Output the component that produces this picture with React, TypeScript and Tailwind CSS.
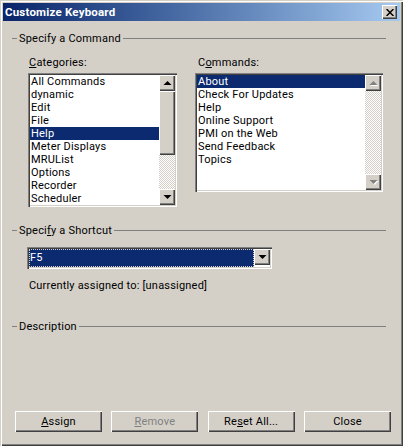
import React from "react";

const categories = ["All Commands", "dynamic", "Edit", "File", "Help", "Meter Displays", "MRUList", "Options", "Recorder", "Scheduler"];
const commands = ["About", "Check For Updates", "Help", "Online Support", "PMI on the Web", "Send Feedback", "Topics"];

const raised = "shadow-[inset_1px_1px_0_#ffffff,inset_-1px_-1px_0_#404040,inset_-2px_-2px_0_#808080]";
const sunken = "shadow-[inset_1px_1px_0_#808080,inset_2px_2px_0_#404040,inset_-1px_-1px_0_#ffffff,inset_-2px_-2px_0_#d4d0c8]";

const Arrow = ({ up, disabled }: { up?: boolean; disabled?: boolean }) => (
  <svg width="9" height="6" viewBox="0 0 9 6" className={disabled ? "drop-shadow-[1px_1px_0_#ffffff]" : ""}>
    <path d={up ? "M4.5 1 L8.5 5 L0.5 5 Z" : "M0.5 1 L8.5 1 L4.5 5 Z"} fill={disabled ? "#808080" : "#000000"} />
  </svg>
);

const ScrollButton = ({ up, disabled }: { up?: boolean; disabled?: boolean }) => (
  <div className={`h-4 w-4 shrink-0 flex items-center justify-center bg-[#d4d0c8] ${raised}`}>
    <Arrow up={up} disabled={disabled} />
  </div>
);

const Track = ({ grow }: { grow?: boolean }) => (
  <div className={`${grow ? "flex-1" : "h-[34px]"} bg-[repeating-conic-gradient(#ffffff_0_25%,#d4d0c8_0_50%)] bg-[length:2px_2px]`} />
);

const GroupHeader = ({ children }: { children: React.ReactNode }) => (
  <div className="flex items-center h-[13px] pr-[14px]">
    <div className="w-[5px] h-px bg-[#808080] mr-[2px]" />
    <span>{children}</span>
    <div className="flex-1 h-px bg-[#808080] ml-[2px]" />
  </div>
);

const ListBox = ({ items, selected, width, height, children }: { items: string[]; selected: string; width: string; height: string; children: React.ReactNode }) => (
  <div className={`${width} ${height} ${sunken} p-[2px] bg-white flex`}>
    <div className="flex-1 flex flex-col text-black">
      {items.map((it) => (
        <div key={it} className={`h-[13px] leading-[13px] pl-[1px] whitespace-nowrap ${it === selected ? "bg-[#0c2a70] text-white" : ""}`}>
          {it}
        </div>
      ))}
    </div>
    <div className="w-4 flex flex-col">{children}</div>
  </div>
);

const Button = ({ children, disabled }: { children: React.ReactNode; disabled?: boolean }) => (
  <div className={`w-[87px] h-[21px] flex items-center justify-center bg-[#d4d0c8] ${raised} ${disabled ? "text-[#808080]" : "text-black"}`}>
    <span>{children}</span>
  </div>
);

export default function App() {
  return (
    <div className="w-[403px] h-[446px] flex flex-col p-[3px] bg-[#d4d0c8] text-[#000000] text-[11px] tracking-[0.2px] leading-[13px] font-['Roboto',sans-serif] overflow-hidden shadow-[inset_1px_1px_0_#d4d0c8,inset_2px_2px_0_#ffffff,inset_-1px_-1px_0_#404040,inset_-2px_-2px_0_#808080]">
      {/* Title bar */}
      <div className="h-[18px] shrink-0 flex items-center justify-between pl-[2px] pr-[3px] bg-linear-to-r from-[#0a246a] to-[#a6caf0]">
        <span className="text-white font-bold text-[11.5px]">Customize Keyboard</span>
        <div className={`w-[15px] h-[14px] flex items-center justify-center bg-[#d4d0c8] ${raised}`}>
          <svg width="8" height="7" viewBox="0 0 8 7">
            <path d="M0.5 0 L7.5 7 M7.5 0 L0.5 7" stroke="#000000" strokeWidth="1.5" />
          </svg>
        </div>
      </div>

      {/* Body */}
      <div className="flex-1 flex flex-col pl-[9px] pt-[11px]">
        <GroupHeader>Specify a Command</GroupHeader>

        <div className="flex mt-[11px] pl-[16px]">
          <div className="flex flex-col w-[149px]">
            <div className="h-[13px] pl-[1px] mb-[4px]"><u>C</u>ategories:</div>
            <ListBox items={categories} selected="Help" width="w-[149px]" height="h-[134px]">
              <ScrollButton up />
              <div className={`h-16 bg-[#d4d0c8] ${raised}`} />
              <Track />
              <ScrollButton />
            </ListBox>
          </div>
          <div className="flex flex-col w-[188px] ml-[18px]">
            <div className="h-[13px] pl-[3px] mb-[4px]">C<u>o</u>mmands:</div>
            <ListBox items={commands} selected="About" width="w-[188px]" height="h-[119px]">
              <ScrollButton up disabled />
              <Track grow />
              <ScrollButton disabled />
            </ListBox>
          </div>
        </div>

        <div className="mt-[17px]">
          <GroupHeader>Speci<u>f</u>y a Shortcut</GroupHeader>
        </div>

        <div className={`mt-[10px] ml-[15px] w-[245px] h-[22px] ${sunken} p-[2px] bg-white flex`}>
          <div className="flex-1 bg-[#0c2a70] text-white flex items-center pl-[1px] pb-[1px] outline-1 outline-dotted outline-offset-[-1px] outline-[#d4d0c8]">F5</div>
          <ScrollButton />
        </div>

        <div className="mt-[10px] ml-[17px] h-[13px] text-[#000000]">Currently assigned to: [unassigned]</div>

        <div className="mt-[28px]">
          <GroupHeader>Description</GroupHeader>
        </div>

        {/* Buttons */}
        <div className="mt-auto mb-[11px] ml-[3px] flex gap-[9.34px]">
          <Button><u>A</u>ssign</Button>
          <Button disabled><u>R</u>emove</Button>
          <Button>Re<u>s</u>et All...</Button>
          <Button>Close</Button>
        </div>
      </div>
    </div>
  );
}
